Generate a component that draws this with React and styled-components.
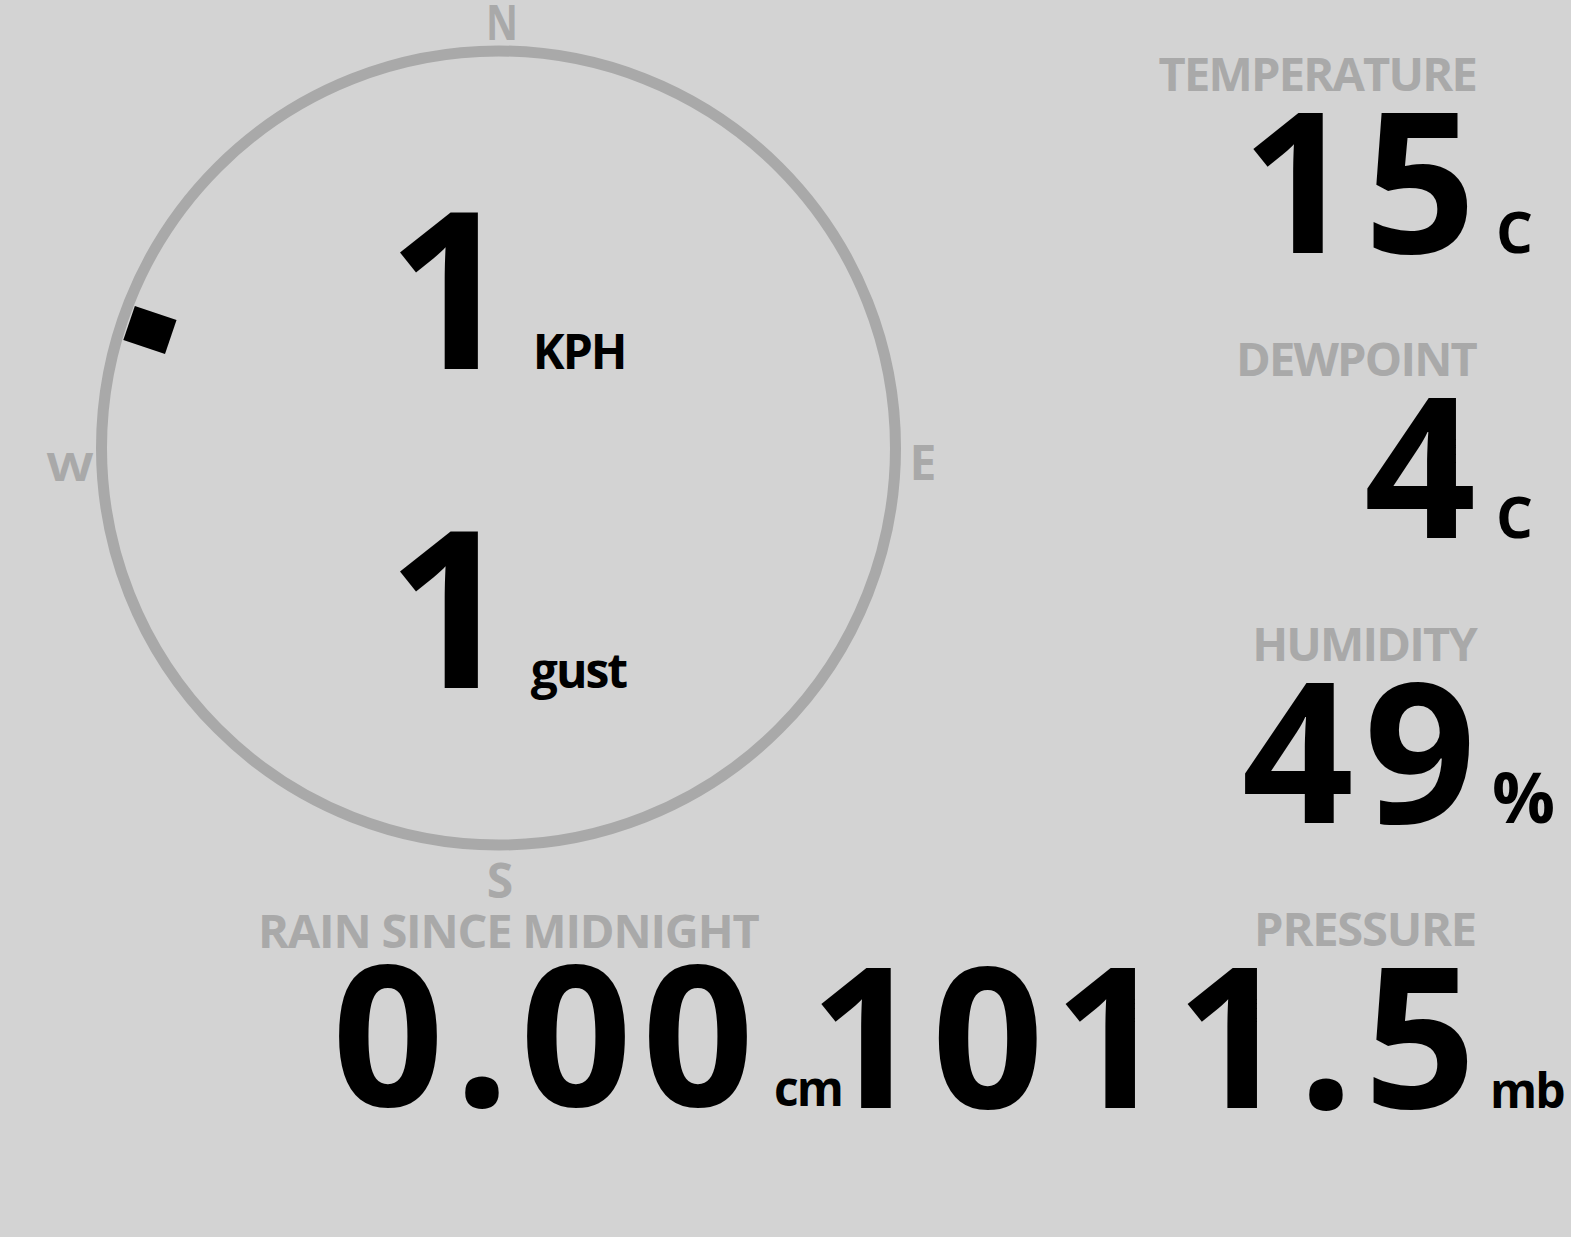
import React from "react";
import styled, { createGlobalStyle } from "styled-components";

const GlobalStyle = createGlobalStyle`
  html, body {
    margin: 0;
    padding: 0;
    background: #d3d3d3;
  }
  body {
    font-family: "Open Sans", "Noto Sans", "DejaVu Sans", sans-serif;
    font-weight: 700;
    color: #000;
  }
`;

const Page = styled.div`
  display: flex;
  align-items: flex-start;
  width: 1571px;
  min-height: 1237px;
  background: #d3d3d3;
  overflow: hidden;
`;

const LeftCol = styled.div`
  display: flex;
  flex-direction: column;
  width: 1000px;
  flex: 0 0 1000px;
`;

const Compass = styled.div`
  position: relative;
  width: 1000px;
  height: 907px;
`;

const CompassSvg = styled.svg`
  position: absolute;
  inset: 0;
  width: 1000px;
  height: 907px;
`;

const Readouts = styled.div`
  position: relative;
  display: flex;
  flex-direction: column;
  gap: 119px;
  padding: 184px 0 0 387px;
`;

const ReadoutRow = styled.div`
  display: flex;
  align-items: baseline;
`;

const BigNum = styled.span`
  font-size: 220px;
  line-height: 200px;
  white-space: nowrap;
`;

const SmallUnit = styled.span`
  font-size: 48px;
  line-height: 40px;
  letter-spacing: -2px;
  margin-left: ${(p) => p.$gap}px;
  white-space: nowrap;
`;

const Label = styled.div`
  font-size: 47px;
  line-height: 47px;
  color: #a9a9a9;
  letter-spacing: ${(p) => (p.$loose ? -1.2 : -1.8)}px;
  white-space: nowrap;
`;

const RainBlock = styled.div`
  display: flex;
  flex-direction: column;
  align-items: flex-start;
  padding-left: 258px;
`;

const ValueRow = styled.div`
  display: flex;
  align-items: baseline;
  margin-top: 1px;
  margin-left: ${(p) => p.$left || 0}px;
`;

const Value = styled.span`
  font-size: 196px;
  line-height: 150px;
  letter-spacing: 10px;
  margin-right: -10px;
  white-space: nowrap;
`;

const RightCol = styled.div`
  display: flex;
  flex-direction: column;
  align-items: flex-end;
  gap: 83px;
  width: 476px;
  flex: 0 0 476px;
  padding-top: 50px;
`;

const Stat = styled.div`
  display: flex;
  flex-direction: column;
  align-items: flex-end;
`;

const StatValueRow = styled.div`
  display: flex;
  align-items: baseline;
  justify-content: flex-end;
  margin-top: 5px;
  width: 476px;
`;

const HangingUnit = styled.span`
  width: 0;
  flex: 0 0 0;
  text-indent: ${(p) => p.$indent}px;
  font-size: ${(p) => p.$size}px;
  line-height: 40px;
  letter-spacing: -2px;
  white-space: nowrap;
`;

const CX = 498.5;
const CY = 448;
const R = 397;

function CompassDial({ bearing }) {
  return (
    <CompassSvg viewBox="0 0 1000 907">
      <circle cx={CX} cy={CY} r={R} fill="none" stroke="#a9a9a9" strokeWidth="11" />
      <g
        fill="#a9a9a9"
        fontFamily='"Open Sans", "Noto Sans", sans-serif'
        fontWeight="700"
        fontSize="48"
        textAnchor="middle"
      >
        <text transform="translate(502 40) scale(0.82 1)">N</text>
        <text x="923" y="480">E</text>
        <text transform="translate(70 481) scale(1 0.82)">W</text>
        <text x="500" y="898">S</text>
      </g>
      <g transform={`translate(${CX} ${CY}) rotate(${bearing})`}>
        <rect x="-18" y="-390" width="36" height="44" fill="#000" />
      </g>
    </CompassSvg>
  );
}

const stats = [
  { label: "TEMPERATURE", value: "15", unit: "C", size: 58, indent: 20 },
  { label: "DEWPOINT", value: "4", unit: "C", size: 58, indent: 20 },
  { label: "HUMIDITY", value: "49", unit: "%", size: 70, indent: 16 },
  { label: "PRESSURE", value: "1011.5", unit: "mb", size: 48, indent: 14, loose: true },
];

export default function App() {
  return (
    <>
      <GlobalStyle />
      <Page>
        <LeftCol>
          <Compass>
            <CompassDial bearing={288.7} />
            <Readouts>
              <ReadoutRow>
                <BigNum>1</BigNum>
                <SmallUnit $gap={20}>KPH</SmallUnit>
              </ReadoutRow>
              <ReadoutRow>
                <BigNum>1</BigNum>
                <SmallUnit $gap={18}>gust</SmallUnit>
              </ReadoutRow>
            </Readouts>
          </Compass>
          <RainBlock>
            <Label $loose>RAIN SINCE MIDNIGHT</Label>
            <ValueRow $left={74}>
              <Value>0.00</Value>
              <SmallUnit $gap={20}>cm</SmallUnit>
            </ValueRow>
          </RainBlock>
        </LeftCol>
        <RightCol>
          {stats.map((s) => (
            <Stat key={s.label}>
              <Label $loose={s.loose}>{s.label}</Label>
              <StatValueRow>
                <Value>{s.value}</Value>
                <HangingUnit $size={s.size} $indent={s.indent}>
                  {s.unit}
                </HangingUnit>
              </StatValueRow>
            </Stat>
          ))}
        </RightCol>
      </Page>
    </>
  );
}
